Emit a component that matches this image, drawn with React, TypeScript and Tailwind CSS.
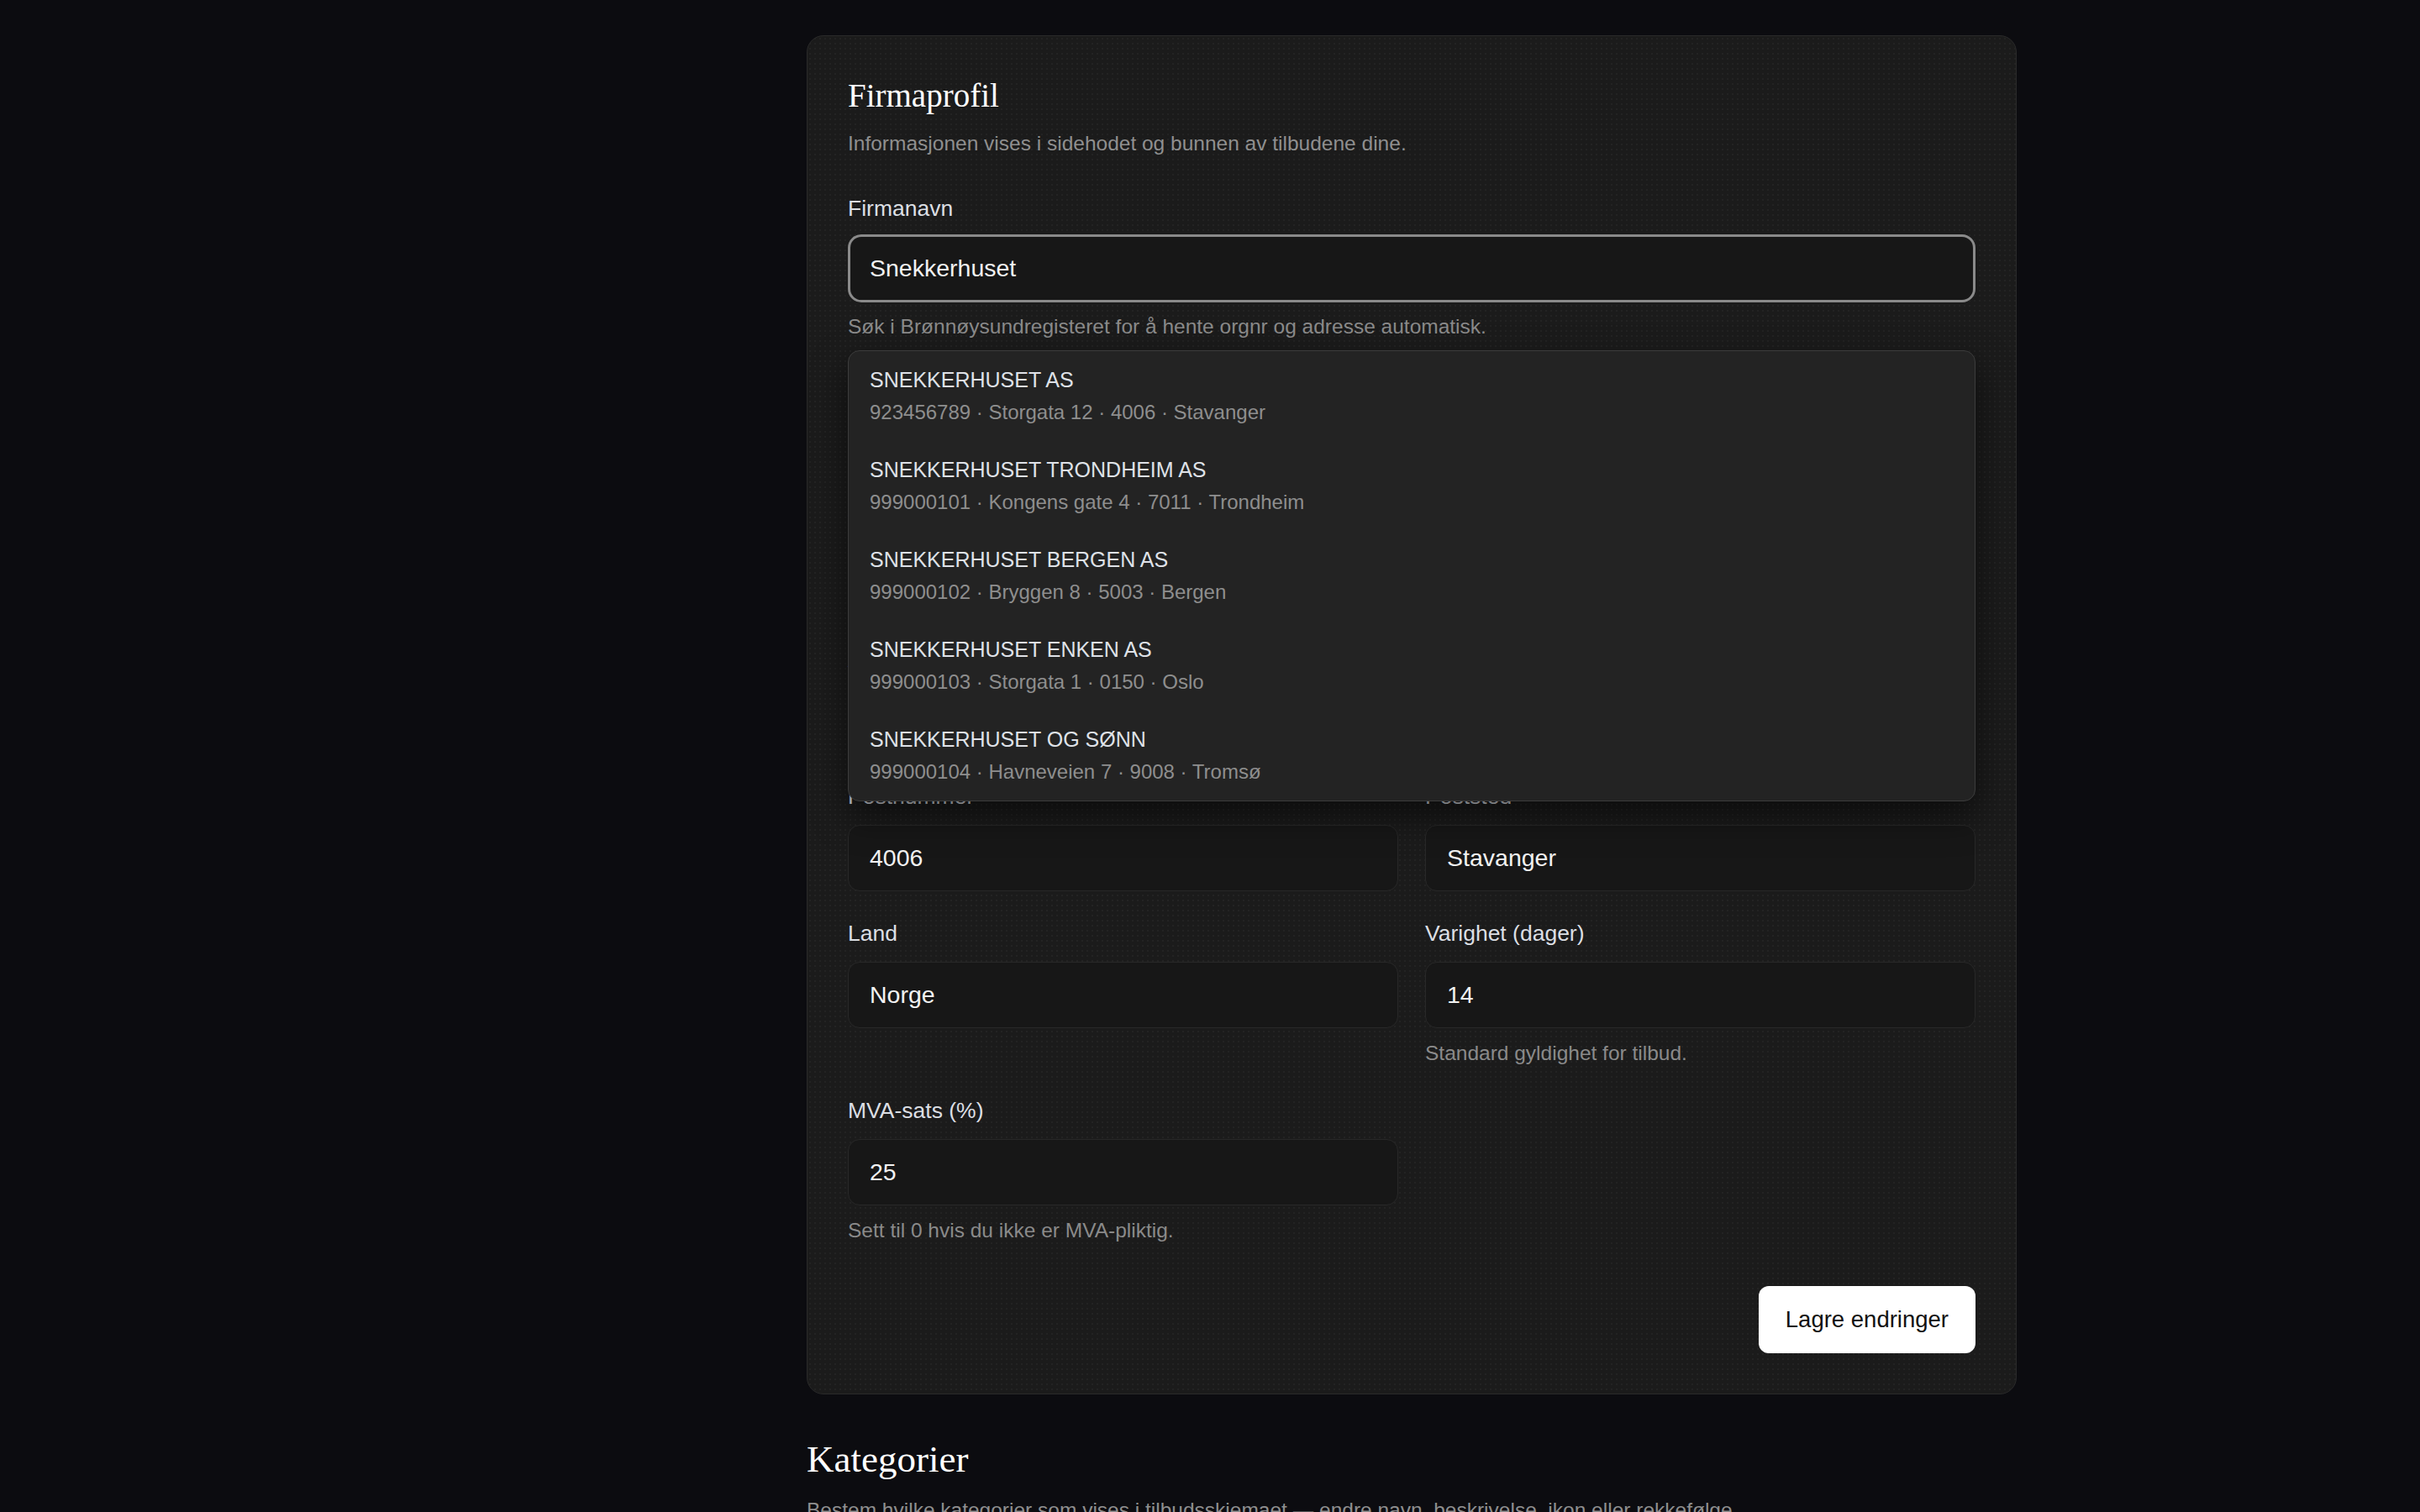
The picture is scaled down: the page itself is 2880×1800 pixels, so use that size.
const sans = { fontFamily: '"Liberation Sans", Arial, sans-serif' }

const suggestions = [
  { name: 'SNEKKERHUSET AS', meta: '923456789 · Storgata 12 · 4006 · Stavanger' },
  { name: 'SNEKKERHUSET TRONDHEIM AS', meta: '999000101 · Kongens gate 4 · 7011 · Trondheim' },
  { name: 'SNEKKERHUSET BERGEN AS', meta: '999000102 · Bryggen 8 · 5003 · Bergen' },
  { name: 'SNEKKERHUSET ENKEN AS', meta: '999000103 · Storgata 1 · 0150 · Oslo' },
  { name: 'SNEKKERHUSET OG SØNN', meta: '999000104 · Havneveien 7 · 9008 · Tromsø' },
]

function Field({ label, value, hint, className = '' }: { label: string; value: string; hint?: string; className?: string }) {
  return (
    <div className={`flex flex-col ${className}`}>
      <label className="mb-4 text-[26.5px] leading-[36px] text-[#dcdfe4]">{label}</label>
      <div className="flex h-[79px] items-center rounded-[14px] border border-[#282828] bg-[#171717] px-[25px] text-[28.5px] text-[#f2f2f2]">
        {value}
      </div>
      {hint && <p className="mt-3 text-[24.5px] leading-[36px] text-[#8a8a8a]">{hint}</p>}
    </div>
  )
}

export default function App() {
  return (
    <div className="flex min-h-screen bg-[#0c0c10]" style={sans}>
      <aside className="w-[480px] shrink-0" />
      <main className="flex-1 pt-[42px]">
        <div className="mx-auto w-[1440px]">
          <section className="rounded-[20px] border border-[#2a2a2a] bg-[#1b1b1b] p-12 [background-image:radial-gradient(rgba(255,255,255,0.035)_1px,transparent_1px)] [background-size:6px_6px]">
            <h2 className="font-['Liberation_Serif',serif] text-[39px] leading-[46px] text-white">Firmaprofil</h2>
            <p className="mt-4 text-[24.5px] leading-[36px] text-[#8f8f8f]">
              Informasjonen vises i sidehodet og bunnen av tilbudene dine.
            </p>

            <div className="mt-[41px] flex flex-col gap-8">
              <div className="relative z-10 flex flex-col">
                <label className="mb-[13px] text-[26.5px] leading-[36px] text-[#dcdfe4]">Firmanavn</label>
                <div className="flex h-[81px] items-center rounded-[16px] border-[3px] border-[#8a8a8a] bg-[#171717] px-[23px] text-[28.5px] text-[#f2f2f2]">
                  Snekkerhuset
                </div>
                <p className="mt-[11px] text-[24.5px] leading-[36px] text-[#8a8a8a]">
                  Søk i Brønnøysundregisteret for å hente orgnr og adresse automatisk.
                </p>

                <ul className="absolute left-0 right-0 top-full mt-[10px] overflow-hidden rounded-[14px] border border-[#3c3c3c] bg-[#232323] shadow-[0_18px_40px_rgba(0,0,0,0.55)]">
                  {suggestions.map((s) => (
                    <li key={s.name} className="px-[25px] py-4">
                      <div className="text-[25px] leading-[36px] text-[#dfe2e8]">{s.name}</div>
                      <div className="mt-[3px] text-[24px] leading-[36px] text-[#8e8e8e]">{s.meta}</div>
                    </li>
                  ))}
                </ul>
              </div>

              <div className="grid grid-cols-2 gap-x-8 gap-y-8 pt-[2px]">
                <Field label="Organisasjonsnummer" value="923456789" />
                <Field label="E-post" value="post@snekkerhuset.no" />
                <Field label="Telefon" value="51 00 00 00" />
                <Field label="Nettside" value="snekkerhuset.no" />
                <Field label="Adresse" value="Storgata 12" className="col-span-2" />
                <Field label="Postnummer" value="4006" />
                <Field label="Poststed" value="Stavanger" />
                <Field label="Land" value="Norge" />
                <Field label="Varighet (dager)" value="14" hint="Standard gyldighet for tilbud." />
                <Field label="MVA-sats (%)" value="25" hint="Sett til 0 hvis du ikke er MVA-pliktig." />
              </div>
            </div>

            <div className="mt-12 flex justify-end">
              <button className="h-[80px] rounded-[12px] bg-white px-8 text-[27.5px] font-medium text-[#111111]">
                Lagre endringer
              </button>
            </div>
          </section>

          <h2 className="mt-[50px] font-['Liberation_Serif',serif] text-[45px] leading-[54px] text-white">Kategorier</h2>
          <p className="mt-4 text-[24.5px] leading-[36px] text-[#8f8f8f]">
            Bestem hvilke kategorier som vises i tilbudsskjemaet — endre navn, beskrivelse, ikon eller rekkefølge.
          </p>
        </div>
      </main>
    </div>
  )
}
